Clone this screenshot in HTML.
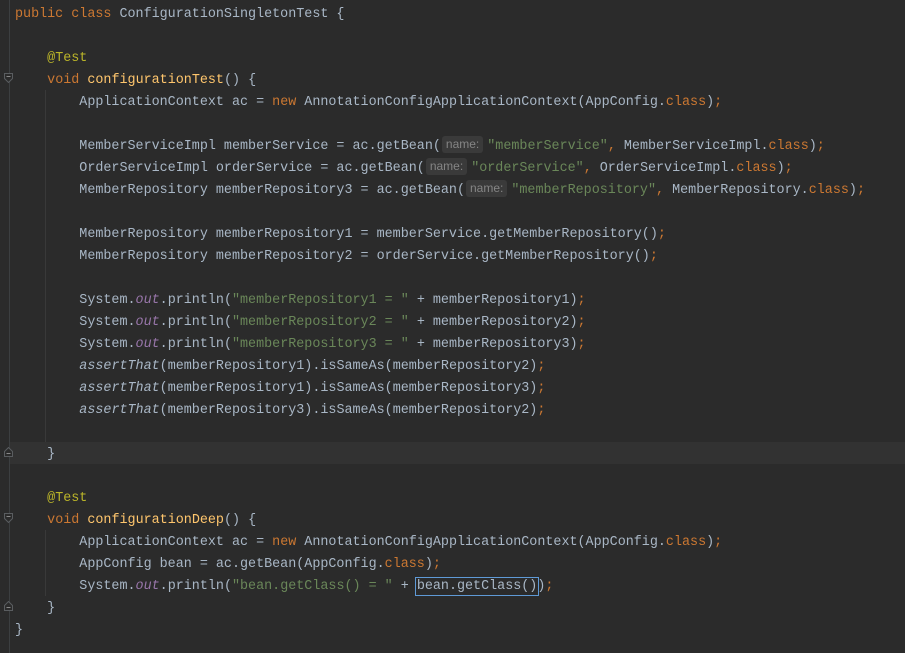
<!DOCTYPE html>
<html><head><meta charset="utf-8"><style>
html,body{margin:0;padding:0;}
body{width:905px;height:653px;background:#2b2b2b;position:relative;overflow:hidden;font-family:"Liberation Mono",monospace;font-size:13.4px;color:#a9b7c6;}
.gut{position:absolute;left:0;top:0;width:9px;height:653px;background:#2b2b2b;border-right:1px solid #3c3f41;}
.hl{position:absolute;left:0;top:442px;width:905px;height:22px;background:#323232;}
.code{position:absolute;left:15px;top:4px;white-space:pre;line-height:22px;}
.k{color:#cc7832}.m{color:#ffc66d}.a{color:#bbb529}.s{color:#6a8759}.f{color:#9876aa;font-style:italic}.i{font-style:italic}
.h{display:inline-block;background:#3a3a3a;color:#858585;font-family:"Liberation Sans",sans-serif;font-size:12px;line-height:17px;padding:0 4px;border-radius:3px;margin:0 4px 0 1px;vertical-align:1px;}
.sel{outline:1px solid #5f9ad6;outline-offset:1px;}
.g{position:absolute;width:1px;background:#393939;}
.fold{position:absolute;left:4px;width:9px;height:10px;}
</style></head><body>
<div class="hl"></div>
<div class="gut"></div>
<div class="g" style="left:45px;top:90px;height:352px"></div>
<div class="g" style="left:45px;top:530px;height:66px"></div>
<svg class="fold" style="top:73px" viewBox="0 0 9 10"><path d="M0.5 0.5H8.5V5.5L4.5 9.5L0.5 5.5Z" fill="#2b2b2b" stroke="#5a5d60"/><path d="M2.5 3.5H6.5" stroke="#888"/></svg>
<svg class="fold" style="top:447px" viewBox="0 0 9 10"><path d="M0.5 9.5H8.5V4.5L4.5 0.5L0.5 4.5Z" fill="#2b2b2b" stroke="#5a5d60"/><path d="M2.5 6.5H6.5" stroke="#888"/></svg>
<svg class="fold" style="top:513px" viewBox="0 0 9 10"><path d="M0.5 0.5H8.5V5.5L4.5 9.5L0.5 5.5Z" fill="#2b2b2b" stroke="#5a5d60"/><path d="M2.5 3.5H6.5" stroke="#888"/></svg>
<svg class="fold" style="top:601px" viewBox="0 0 9 10"><path d="M0.5 9.5H8.5V4.5L4.5 0.5L0.5 4.5Z" fill="#2b2b2b" stroke="#5a5d60"/><path d="M2.5 6.5H6.5" stroke="#888"/></svg>
<div class="code"><span class="k">public class</span> ConfigurationSingletonTest {

    <span class="a">@Test</span>
    <span class="k">void</span> <span class="m">configurationTest</span>() {
        ApplicationContext ac = <span class="k">new</span> AnnotationConfigApplicationContext(AppConfig.<span class="k">class</span>)<span class="k">;</span>

        MemberServiceImpl memberService = ac.getBean(<span class="h">name:</span><span class="s">"memberService"</span><span class="k">,</span> MemberServiceImpl.<span class="k">class</span>)<span class="k">;</span>
        OrderServiceImpl orderService = ac.getBean(<span class="h">name:</span><span class="s">"orderService"</span><span class="k">,</span> OrderServiceImpl.<span class="k">class</span>)<span class="k">;</span>
        MemberRepository memberRepository3 = ac.getBean(<span class="h">name:</span><span class="s">"memberRepository"</span><span class="k">,</span> MemberRepository.<span class="k">class</span>)<span class="k">;</span>

        MemberRepository memberRepository1 = memberService.getMemberRepository()<span class="k">;</span>
        MemberRepository memberRepository2 = orderService.getMemberRepository()<span class="k">;</span>

        System.<span class="f">out</span>.println(<span class="s">"memberRepository1 = "</span> + memberRepository1)<span class="k">;</span>
        System.<span class="f">out</span>.println(<span class="s">"memberRepository2 = "</span> + memberRepository2)<span class="k">;</span>
        System.<span class="f">out</span>.println(<span class="s">"memberRepository3 = "</span> + memberRepository3)<span class="k">;</span>
        <span class="i">assertThat</span>(memberRepository1).isSameAs(memberRepository2)<span class="k">;</span>
        <span class="i">assertThat</span>(memberRepository1).isSameAs(memberRepository3)<span class="k">;</span>
        <span class="i">assertThat</span>(memberRepository3).isSameAs(memberRepository2)<span class="k">;</span>

    }

    <span class="a">@Test</span>
    <span class="k">void</span> <span class="m">configurationDeep</span>() {
        ApplicationContext ac = <span class="k">new</span> AnnotationConfigApplicationContext(AppConfig.<span class="k">class</span>)<span class="k">;</span>
        AppConfig bean = ac.getBean(AppConfig.<span class="k">class</span>)<span class="k">;</span>
        System.<span class="f">out</span>.println(<span class="s">"bean.getClass() = "</span> + <span class="sel">bean.getClass()</span>)<span class="k">;</span>
    }
}</div>
</body></html>
